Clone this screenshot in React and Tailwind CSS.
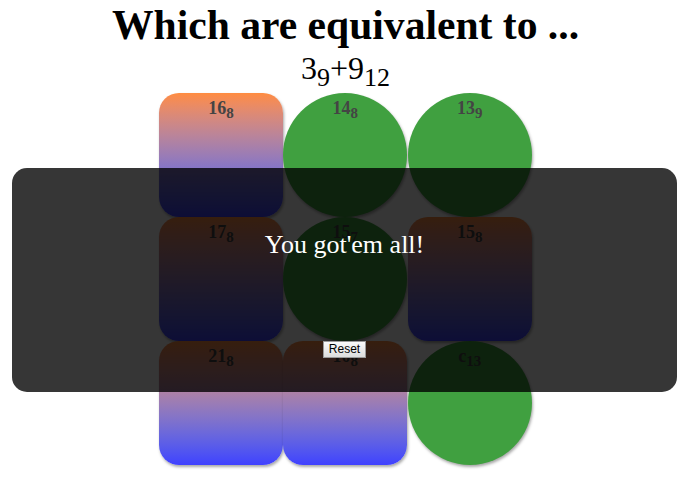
import React from "react";

const tiles = [
  { n: "16", b: "8", round: false },
  { n: "14", b: "8", round: true },
  { n: "13", b: "9", round: true },
  { n: "17", b: "8", round: false },
  { n: "15", b: "7", round: true },
  { n: "15", b: "8", round: false },
  { n: "21", b: "8", round: false },
  { n: "10", b: "8", round: false },
  { n: "c", b: "13", round: true },
];

const Tile = ({ tile }) => (
  <div
    className={`h-[124px] w-[124px] flex justify-center pt-[6px] shadow-[1px_2px_3px_rgba(0,0,0,0.35)] ${
      tile.round
        ? "rounded-full bg-[#40a040]"
        : "rounded-[20px] bg-gradient-to-b from-[#ff8c40] to-[#4040ff]"
    }`}
  >
    <span className="text-[18px] font-bold text-[#444] leading-none">
      {tile.n}
      <sub className="text-[15px]">{tile.b}</sub>
    </span>
  </div>
);

export default function App() {
  return (
    <div className="relative h-[494px] w-[695px] overflow-hidden bg-white font-['Liberation_Serif',serif] text-black">
      <h1 className="pl-[-4px] pr-[4px] pt-[2px] text-center text-[41.6px] font-bold leading-[46px]">
        Which are equivalent to ...
      </h1>
      <div className="pr-[4px] text-center text-[32px] leading-[40px]">
        3<sub className="text-[26px]">9</sub>+9<sub className="text-[26px]">12</sub>
      </div>

      {/* answer grid */}
      <div className="ml-[159px] mt-[5px] grid w-[373px] grid-cols-3">
        {tiles.map((t, i) => (
          <Tile key={i} tile={t} />
        ))}
      </div>

      {/* done overlay */}
      <div className="absolute left-[12px] top-[168px] flex h-[224px] w-[665px] flex-col items-center rounded-[15px] bg-[rgba(0,0,0,0.79)]">
        <p className="mt-[62px] text-[26px] leading-[30px] text-white">You got'em all!</p>
        <button className="mt-[81px] border border-[#999] bg-gradient-to-b from-[#fafafa] to-[#dcdcdc] px-[5px] py-0 font-['Liberation_Sans',sans-serif] text-[12px] leading-[15px] text-black">
          Reset
        </button>
      </div>
    </div>
  );
}
